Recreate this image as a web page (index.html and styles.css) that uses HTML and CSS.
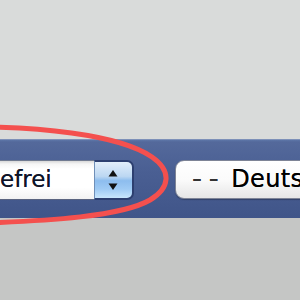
FILE: index.html
```html
<!DOCTYPE html>
<html>
<head>
<meta charset="utf-8">
<link rel="stylesheet" href="styles.css">
</head>
<body>
<div class="page">
  <div class="top"></div>
  <div class="bar">
    <div class="select">
      <span class="value">efrei</span>
      <span class="stepper">
        <svg width="12" height="22" viewBox="0 0 12 22">
          <path d="M6 1 L10.5 7.5 L1.5 7.5 Z" fill="#111"/>
          <path d="M6 21 L10.5 14.5 L1.5 14.5 Z" fill="#111"/>
        </svg>
      </span>
    </div>
    <div class="button"><span class="dashes">--</span><span class="label">Deutsch</span></div>
  </div>
  <div class="bottom"></div>
  <svg class="mark" width="300" height="300" viewBox="0 0 300 300">
    <path d="M -60 127 C 40 125, 120 135, 152 157 C 172 171, 170 188, 150 200 C 124 215, 60 222, -60 224" fill="none" stroke="#f4504e" stroke-width="5" stroke-linecap="round"/>
  </svg>
</div>
</body>
</html>
```
FILE: styles.css
```css
html, body {
  margin: 0;
  padding: 0;
}
body {
  width: 300px;
  height: 300px;
  overflow: hidden;
  font-family: "DejaVu Sans", "Liberation Sans", sans-serif;
}
.page {
  position: relative;
  width: 300px;
  height: 300px;
  overflow: hidden;
  display: flex;
  flex-direction: column;
}
.top {
  height: 139px;
  background: #d9dbda;
}
.bar {
  height: 79px;
  display: flex;
  align-items: center;
  background: linear-gradient(#5d76a8 0px, #54699b 2px, #4a5f93 40%, #405589 100%);
  border-top: 1px solid #7d90b8;
  box-sizing: border-box;
}
.bottom {
  flex: 1;
  background: #c5c6c5;
}
.select {
  flex: none;
  width: 134px;
  height: 40px;
  display: flex;
  box-sizing: border-box;
  margin-top: 1px;
}
.value {
  flex: 1;
  display: flex;
  align-items: center;
  font-size: 23px;
  color: #0e1428;
  text-shadow: 0 0 0.6px rgba(14, 20, 40, 0.8);
  background: linear-gradient(#d8d8d8 0px, #f6f6f6 3px, #ffffff 8px, #ffffff 70%, #f2f2f2 100%);
  border-top: 1px solid #707a90;
  border-bottom: 1px solid #5a6480;
  padding-bottom: 1px;
}
.stepper {
  flex: none;
  width: 40px;
  box-sizing: border-box;
  display: flex;
  align-items: center;
  justify-content: center;
  border: 2px solid #2d3f70;
  border-left: 1px solid #6f8fb8;
  border-radius: 0 7px 7px 0;
  background: linear-gradient(#e2eefa 0%, #bcd7f2 40%, #8dbdee 52%, #9fcaf4 75%, #c8e6fc 100%);
}
.stepper svg {
  display: block;
  margin-left: -2px;
}
.button {
  flex: none;
  width: 200px;
  height: 39px;
  margin-left: 41px;
  box-sizing: border-box;
  display: flex;
  align-items: center;
  padding-left: 16px;
  font-size: 24px;
  color: #000;
  text-shadow: 0 0 0.6px rgba(0, 0, 0, 0.8);
  background: linear-gradient(#ffffff 0%, #fbfbfb 50%, #e6e6e6 100%);
  border: 1px solid #7e8496;
  border-radius: 9px 0 0 9px;
  box-shadow: 0 1px 1px rgba(0, 0, 0, 0.25);
}
.dashes {
  display: inline-block;
  letter-spacing: 6px;
  color: #333;
  margin-right: 10px;
  transform: scaleX(1.15);
  transform-origin: left center;
}
.label {
  letter-spacing: 0.3px;
}
.mark {
  position: absolute;
  left: 0;
  top: 0;
}
```
